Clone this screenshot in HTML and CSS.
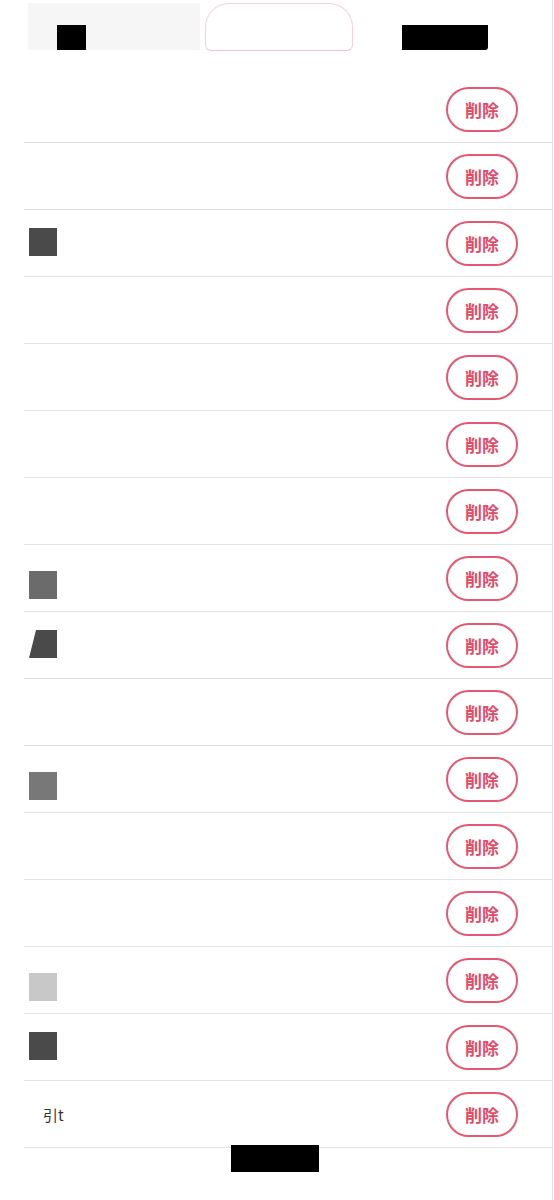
FILE: index.html
```
<!DOCTYPE html>
<html lang="ja">
<head>
<meta charset="UTF-8" />
<title>ブロックリスト</title>
<link rel="stylesheet" href="styles.css">
</head>
<body>
<div class="screen">
	<div class="statusbar">
		<div class="sb-left"><div class="sb-black"></div></div>
		<div class="sb-pill"></div>
		<div class="sb-right"></div>
	</div>

	<ul class="list">
		<li class="row"><span class="name"></span><button class="del">削除</button></li>
		<li class="row"><span class="name"></span><button class="del">削除</button></li>
		<li class="row"><span class="name"><i class="mark dark"></i></span><button class="del">削除</button></li>
		<li class="row"><span class="name"></span><button class="del">削除</button></li>
		<li class="row"><span class="name"></span><button class="del">削除</button></li>
		<li class="row"><span class="name"></span><button class="del">削除</button></li>
		<li class="row"><span class="name"></span><button class="del">削除</button></li>
		<li class="row"><span class="name"><i class="mark mid low"></i></span><button class="del">削除</button></li>
		<li class="row"><span class="name"><i class="mark dark slant"></i></span><button class="del">削除</button></li>
		<li class="row"><span class="name"></span><button class="del">削除</button></li>
		<li class="row"><span class="name"><i class="mark grey low"></i></span><button class="del">削除</button></li>
		<li class="row"><span class="name"></span><button class="del">削除</button></li>
		<li class="row"><span class="name"></span><button class="del">削除</button></li>
		<li class="row"><span class="name"><i class="mark light low"></i></span><button class="del">削除</button></li>
		<li class="row"><span class="name"><i class="mark dark"></i></span><button class="del">削除</button></li>
		<li class="row"><span class="name frag">引t</span><button class="del">削除</button></li>
	</ul>

	<div class="home">
		<div class="home-bar"></div>
	</div>
</div>
</body>
</html>
```

FILE: styles.css
```
html, body {
	margin: 0;
	padding: 0;
	background-color: #fff;
}

body {
	font-family: "Noto Sans CJK JP", "Noto Sans", sans-serif;
}

.screen {
	width: 553px;
	min-height: 1200px;
	border-right: 1px solid #e2e2e2;
	box-sizing: border-box;
}

/* status bar (masked) */
.statusbar {
	height: 76px;
	display: flex;
	align-items: flex-start;
	padding-top: 3px;
	box-sizing: border-box;
}

.sb-left {
	margin-left: 28px;
	width: 172px;
	height: 47px;
	background-color: #f6f6f6;
	display: flex;
	align-items: flex-end;
}

.sb-black {
	margin-left: 29px;
	width: 29px;
	height: 25px;
	background-color: #000;
}

.sb-pill {
	margin-left: 5px;
	width: 146px;
	height: 46px;
	border: 1px solid #f6d2da;
	border-bottom-color: #f3c3cd;
	border-radius: 24px 24px 6px 6px;
}

.sb-right {
	margin-left: 49px;
	margin-top: 22px;
	width: 86px;
	height: 25px;
	background-color: #000;
	border-bottom-right-radius: 3px;
}

/* list */
.list {
	list-style: none;
	margin: 0;
	padding: 0 0 0 24px;
}

.row {
	height: 66px;
	border-bottom: 1px solid #e3e3e3;
	display: flex;
	align-items: center;
	justify-content: space-between;
	padding-right: 34px;
}

.name {
	display: flex;
	align-items: center;
	padding-left: 5px;
	font-size: 15px;
	color: #333;
}

.frag {
	padding-left: 19px;
}

.mark {
	display: block;
	width: 28px;
	height: 28px;
	margin-top: -2px;
}

.mark.low {
	margin-top: 14px;
}

.dark { background-color: #4a4a4a; }
.mid { background-color: #6b6b6b; }
.grey { background-color: #787878; }
.light { background-color: #c8c8c8; }

.slant {
	clip-path: polygon(25% 0, 100% 0, 100% 100%, 0 100%);
}

.del {
	width: 72px;
	height: 45px;
	border: 2px solid #e55873;
	border-radius: 23px;
	background-color: #fff;
	color: #e34a68;
	font-family: "Noto Sans CJK JP", sans-serif;
	font-size: 17px;
	font-weight: bold;
	padding: 0;
}

/* home indicator (masked) */
.home {
	display: flex;
	justify-content: center;
	padding-right: 1px;
}

.home-bar {
	margin-top: -3px;
	margin-left: -2px;
	width: 88px;
	height: 27px;
	background-color: #000;
}
```
